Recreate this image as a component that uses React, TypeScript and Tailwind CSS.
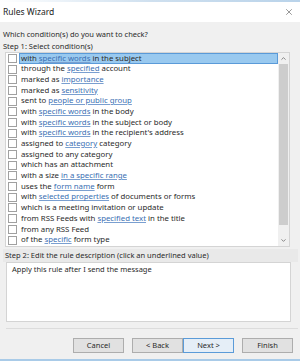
import { X, ChevronUp, ChevronDown } from "lucide-react";

type Part = string | { link: string };

const conditions: Part[][] = [
  ["with ", { link: "specific words" }, " in the subject"],
  ["through the ", { link: "specified" }, " account"],
  ["marked as ", { link: "importance" }],
  ["marked as ", { link: "sensitivity" }],
  ["sent to ", { link: "people or public group" }],
  ["with ", { link: "specific words" }, " in the body"],
  ["with ", { link: "specific words" }, " in the subject or body"],
  ["with ", { link: "specific words" }, " in the recipient's address"],
  ["assigned to ", { link: "category" }, " category"],
  ["assigned to any category"],
  ["which has an attachment"],
  ["with a size ", { link: "in a specific range" }],
  ["uses the ", { link: "form name" }, " form"],
  ["with ", { link: "selected properties" }, " of documents or forms"],
  ["which is a meeting invitation or update"],
  ["from RSS Feeds with ", { link: "specified text" }, " in the title"],
  ["from any RSS Feed"],
  ["of the ", { link: "specific" }, " form type"],
];

function Row({ parts, selected }: { parts: Part[]; selected?: boolean }) {
  return (
    <div className="flex h-[10.7px] items-center">
      <div className="ml-[2px] mr-[2px] h-[9px] w-[9px] shrink-0 border border-[#a0a0a0] bg-white" />
      <div
        className={
          selected
            ? "flex h-full flex-1 items-center border border-[#5a9ad8] bg-[#99c9ef] pl-[1px]"
            : "flex h-full flex-1 items-center pl-[2px]"
        }
      >
        <span className="whitespace-nowrap">
          {parts.map((p, i) =>
            typeof p === "string" ? (
              <span key={i}>{p}</span>
            ) : (
              <span key={i} className="text-[#3a6fb3] underline decoration-[#7a9fd0] underline-offset-[1px]">
                {p.link}
              </span>
            )
          )}
        </span>
      </div>
    </div>
  );
}

export default function App() {
  return (
    <div className="flex h-[361px] w-[300px] flex-col overflow-hidden bg-[#f0f0f0] font-['Noto_Sans',sans-serif] text-[7.5px] text-[#2a2a2a]">
      <div className="h-[2px] bg-gradient-to-r from-white via-[#cfe0ef] to-[#b9d3ea]" />
      <div className="flex h-[20px] items-center justify-between bg-white pl-[3px] pr-[6px]">
        <span className="text-[8.5px] text-[#222]">Rules Wizard</span>
        <X className="h-[10px] w-[10px] text-[#333]" strokeWidth={1.2} />
      </div>

      <div className="flex flex-1 flex-col pl-[3px] pr-[10px]">
        <div className="mt-[7px] h-[10px] leading-[10px]">Which condition(s) do you want to check?</div>
        <div className="mt-[2px] h-[10px] leading-[10px]">Step 1: Select condition(s)</div>

        <div className="ml-[2px] mt-[1px] flex h-[195px] border border-[#d4d4d4] bg-white text-[7.8px]">
          <div className="flex-1 overflow-hidden">
            {conditions.map((c, i) => (
              <Row key={i} parts={c} selected={i === 0} />
            ))}
          </div>
          <div className="flex w-[11px] flex-col bg-[#f0f0f0]">
            <div className="flex h-[11px] items-center justify-center">
              <ChevronUp className="h-[7px] w-[7px] text-[#606060]" strokeWidth={2.5} />
            </div>
            <div className="mx-[1px] h-[161px] bg-[#cdcdcd]" />
            <div className="flex-1" />
            <div className="flex h-[11px] items-center justify-center">
              <ChevronDown className="h-[7px] w-[7px] text-[#606060]" strokeWidth={2.5} />
            </div>
          </div>
        </div>

        <div className="-mr-[8px] mt-[2px] flex h-[13px] items-center bg-[#e9e9e9] pl-[2px]">
          Step 2: Edit the rule description (click an underlined value)
        </div>

        <div className="ml-[3px] -mr-[1px] h-[60px] border border-[#d4d4d4] bg-white px-[5px] pt-[1px]">
          Apply this rule after I send the message
        </div>

        <div className="-mr-[8px] ml-[3px] mt-[6px] h-px bg-[#dcdcdc]" />

        <div className="mt-[9px] flex justify-end gap-[8px]">
          <button className="h-[15px] w-[51px] border border-[#adadad] bg-[#e1e1e1]">Cancel</button>
          <div className="flex">
            <button className="h-[15px] w-[51px] border border-[#adadad] bg-[#e1e1e1]">&lt; Back</button>
            <button className="h-[15px] w-[51px] border border-[#5b9bd8] bg-[#e5eef7]">Next &gt;</button>
          </div>
          <button className="-mr-[3px] h-[15px] w-[51px] border border-[#adadad] bg-[#e1e1e1]">Finish</button>
        </div>
      </div>
      <div className="h-[2px] bg-[#a9cbe8]" />
    </div>
  );
}
